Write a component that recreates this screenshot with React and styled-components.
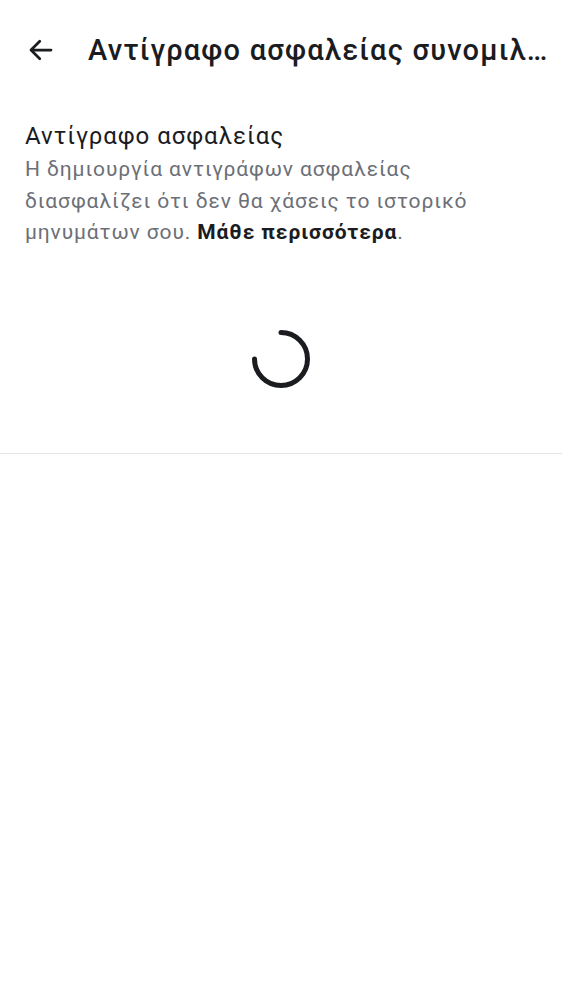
import styled, { createGlobalStyle } from "styled-components";

const Global = createGlobalStyle`
  body {
    margin: 0;
    background: #ffffff;
    font-family: Roboto, "Noto Sans", sans-serif;
  }
`;

const Page = styled.div`
  width: 562px;
  min-height: 1000px;
  background: #fff;
`;

const Header = styled.div`
  display: flex;
  align-items: center;
  height: 100px;
  padding: 0 14px 0 26px;
  box-sizing: border-box;
`;

const BackButton = styled.button`
  border: none;
  background: transparent;
  padding: 0;
  width: 34px;
  height: 34px;
  display: flex;
  align-items: center;
  justify-content: flex-start;
  margin-right: 28px;
  cursor: pointer;
  color: #1b1c1f;
`;

const Title = styled.h1`
  margin: 0;
  font-size: 29px;
  font-weight: 500;
  letter-spacing: 1.2px;
  color: #1b1c1f;
  white-space: nowrap;
  overflow: hidden;
  text-overflow: ellipsis;
  flex: 1;
  min-width: 0;
`;

const Section = styled.div`
  padding: 20px 25px 0;
`;

const SectionTitle = styled.div`
  font-size: 24px;
  letter-spacing: 0.95px;
  color: #1b1c1f;
  line-height: 32px;
`;

const Description = styled.p`
  margin: 2px 0 0;
  font-size: 21px;
  letter-spacing: 0.9px;
  line-height: 31.5px;
  color: #6c6f77;
  max-width: 480px;
`;

const Link = styled.a`
  color: #1b1c1f;
  font-weight: 700;
  text-decoration: none;
`;

const SpinnerWrap = styled.div`
  display: flex;
  justify-content: center;
  padding: 77px 0 61px;
`;

const Divider = styled.div`
  height: 1px;
  background: #e4e4e6;
`;

const Spinner = () => (
  <svg width="66" height="66" viewBox="0 0 66 66">
    <path
      d="M33 6.5 A26.5 26.5 0 1 1 6.5 33"
      fill="none"
      stroke="#1b1c1f"
      strokeWidth="5"
      strokeLinecap="round"
    />
  </svg>
);

export default function App() {
  return (
    <Page>
      <Global />
      <Header>
        <BackButton aria-label="Back">
          <svg width="30" height="30" viewBox="0 0 24 24" fill="none" stroke="currentColor" strokeWidth="2.2" strokeLinecap="round" strokeLinejoin="round">
            <path d="M20 12H4.5" />
            <path d="M11 5l-7 7 7 7" />
          </svg>
        </BackButton>
        <Title>Αντίγραφο ασφαλείας συνομιλιών</Title>
      </Header>
      <Section>
        <SectionTitle>Αντίγραφο ασφαλείας</SectionTitle>
        <Description>
          Η δημιουργία αντιγράφων ασφαλείας διασφαλίζει ότι δεν θα χάσεις το ιστορικό μηνυμάτων σου. <Link href="#">Μάθε περισσότερα</Link>.
        </Description>
      </Section>
      <SpinnerWrap>
        <Spinner />
      </SpinnerWrap>
      <Divider />
    </Page>
  );
}
